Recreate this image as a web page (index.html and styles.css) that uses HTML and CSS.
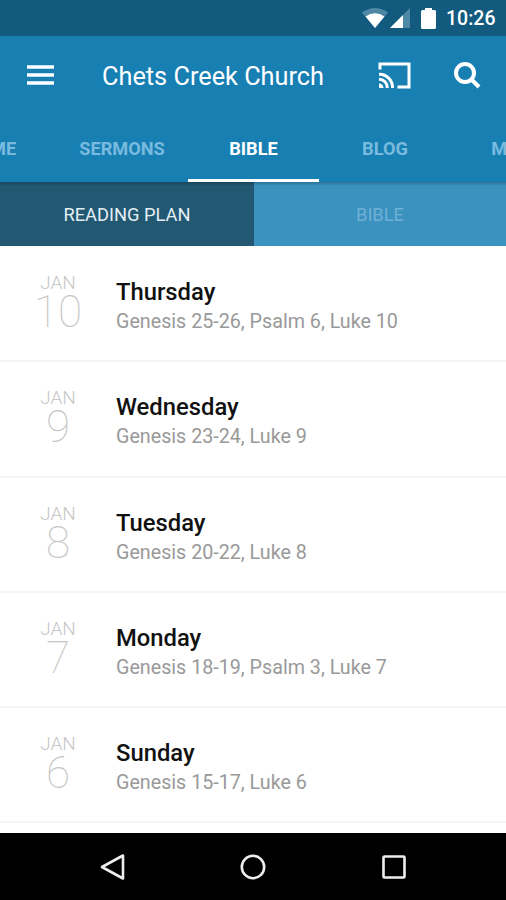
FILE: index.html
```html
<!DOCTYPE html>
<html lang="en">
<head>
  <meta charset="utf-8">
  <title>Chets Creek Church</title>
  <link rel="stylesheet" href="styles.css">
</head>
<body>
  <div class="statusBar">
    <svg class="wifi" width="26" height="20" viewBox="0 0 26 20">
      <path class="dim" d="M0 4.500Q13-4.500 26 4.500L13 20Z"/>
      <path d="M3.500 8.500Q13 2 22.500 8.500L13 20Z"/>
    </svg>
    <svg class="signal" width="20" height="20" viewBox="0 0 20 20">
      <path class="dim" d="M0 20L20 0V20Z"/>
      <path d="M0 20L13 7V20Z"/>
    </svg>
    <svg class="battery" width="15" height="21" viewBox="0 0 15 21">
      <path d="M4 0H11V2H13.500Q15 2 15 3.500V19.500Q15 21 13.500 21H1.500Q0 21 0 19.500V3.500Q0 2 1.500 2H4Z"/>
    </svg>
    <span class="clock">10:26</span>
  </div>

  <header class="appBar">
    <svg class="menuIcon" width="27" height="20" viewBox="0 0 27 20">
      <path d="M0 2H27M0 10H27M0 18H27"/>
    </svg>
    <h1>Chets Creek Church</h1>
    <svg class="castIcon" width="33" height="27" viewBox="0 0 33 27">
      <path d="M2 7.500V2H31V25H19.500"/>
      <path d="M1 12.200A13.200 13.200 0 0 1 14.500 26M1 17.200A8.300 8.300 0 0 1 9.300 26"/>
      <path class="dot" d="M1 21.500A4.500 4.500 0 0 1 5.500 26H1Z"/>
    </svg>
    <svg class="searchIcon" width="27" height="27" viewBox="0 0 27 27">
      <circle cx="11" cy="11" r="9"/>
      <path d="M17 17L25 25"/>
    </svg>
  </header>

  <nav class="tabs">
    <span class="tab">HOME</span>
    <span class="tab">SERMONS</span>
    <span class="tab active">BIBLE</span>
    <span class="tab">BLOG</span>
    <span class="tab">MORE</span>
  </nav>

  <div class="subTabs">
    <span class="subTab selected">READING PLAN</span>
    <span class="subTab">BIBLE</span>
  </div>

  <main class="plan">
    <div class="day">
      <div class="date"><span class="month">JAN</span><span class="number">10</span></div>
      <div class="reading"><h2>Thursday</h2><p>Genesis 25-26, Psalm 6, Luke 10</p></div>
    </div>
    <div class="day">
      <div class="date"><span class="month">JAN</span><span class="number">9</span></div>
      <div class="reading"><h2>Wednesday</h2><p>Genesis 23-24, Luke 9</p></div>
    </div>
    <div class="day">
      <div class="date"><span class="month">JAN</span><span class="number">8</span></div>
      <div class="reading"><h2>Tuesday</h2><p>Genesis 20-22, Luke 8</p></div>
    </div>
    <div class="day">
      <div class="date"><span class="month">JAN</span><span class="number">7</span></div>
      <div class="reading"><h2>Monday</h2><p>Genesis 18-19, Psalm 3, Luke 7</p></div>
    </div>
    <div class="day">
      <div class="date"><span class="month">JAN</span><span class="number">6</span></div>
      <div class="reading"><h2>Sunday</h2><p>Genesis 15-17, Luke 6</p></div>
    </div>
  </main>

  <footer class="navBar">
    <svg width="28" height="30" viewBox="0 0 28 30">
      <path d="M3 15L24 3.500V26.500Z"/>
    </svg>
    <svg width="28" height="30" viewBox="0 0 28 30">
      <circle cx="14" cy="15" r="11.200"/>
    </svg>
    <svg width="28" height="30" viewBox="0 0 28 30">
      <rect x="3.500" y="4.500" width="21" height="21" rx="1"/>
    </svg>
  </footer>
</body>
</html>
```
FILE: styles.css
```css
* {
  box-sizing: border-box;
}

body {
  margin: 0;
  height: 900px;
  display: flex;
  flex-direction: column;
  overflow: hidden;
  background-color: #fff;
  font-family: Roboto, "Noto Sans", sans-serif;
}

h1, h2, p {
  margin: 0;
}

svg {
  display: block;
  flex: none;
}

.statusBar {
  height: 36px;
  flex: none;
  display: flex;
  align-items: center;
  justify-content: flex-end;
  padding-right: 11px;
  background-color: #125b7f;
  color: #fff;
}

.statusBar svg {
  fill: #fff;
}

.statusBar .dim {
  fill: #4f88a4;
}

.signal {
  margin-left: 2px;
}

.battery {
  margin-left: 11px;
}

.clock {
  width: 49px;
  margin-left: 10px;
  font-size: 19.5px;
  font-weight: 500;
  white-space: nowrap;
}

.appBar {
  height: 79px;
  flex: none;
  display: flex;
  align-items: center;
  padding: 0 25px 0 27px;
  background-color: #187fb3;
  color: #fff;
}

.appBar svg {
  fill: none;
  stroke: #fff;
  stroke-width: 3.5;
}

.appBar .menuIcon {
  margin-bottom: 2px;
}

.appBar h1 {
  flex: 1;
  margin-left: 48px;
  padding-top: 1px;
  font-size: 25.3px;
  font-weight: 400;
  white-space: nowrap;
}

.appBar .castIcon {
  stroke-width: 3;
}

.appBar .dot {
  fill: #fff;
  stroke: none;
}

.appBar .searchIcon {
  margin-left: 43px;
  stroke-width: 4;
}

.tabs {
  height: 67px;
  flex: none;
  display: flex;
  justify-content: center;
  overflow: hidden;
  padding-left: 1px;
  background-color: #187fb3;
}

.tab {
  width: 131.5px;
  flex: none;
  padding-top: 22px;
  border-bottom: 3px solid transparent;
  color: #79badf;
  font-size: 18.2px;
  font-weight: 700;
  line-height: 24px;
  text-align: center;
}

.tab.active {
  color: #fff;
  border-color: #fff;
}

.subTabs {
  height: 64px;
  flex: none;
  display: grid;
  grid-template-columns: 254px 1fr;
}

.subTab {
  height: 64px;
  line-height: 66px;
  text-align: center;
  background: linear-gradient(rgba(0, 0, 0, 0.22), transparent 4px) #3b92bf;
  color: #6db1d6;
  font-size: 18.3px;
}

.subTab.selected {
  background-color: #235872;
  color: #e4eff5;
}

.plan {
  flex: 1;
  padding-top: 1px;
}

.day {
  height: 115.3px;
  display: flex;
  border-bottom: 2px solid #f5f5f5;
}

.date {
  width: 116px;
  padding-top: 26px;
  display: flex;
  flex-direction: column;
  align-items: center;
  color: #c6c6c6;
}

.month {
  font-size: 19px;
  font-weight: 300;
  line-height: 20px;
}

.number {
  font-size: 44px;
  font-weight: 100;
  line-height: 39px;
}

.reading {
  padding-top: 30px;
}

.reading h2 {
  color: #111;
  font-size: 23.8px;
  font-weight: 500;
  line-height: 30px;
}

.reading p {
  color: #999;
  font-size: 19.7px;
  line-height: 29px;
}

.navBar {
  height: 67px;
  flex: none;
  display: flex;
  justify-content: center;
  align-items: center;
  gap: 112.5px;
  background-color: #000;
}

.navBar svg {
  fill: none;
  stroke: #eee;
  stroke-width: 2.6;
  stroke-linejoin: round;
}
```
